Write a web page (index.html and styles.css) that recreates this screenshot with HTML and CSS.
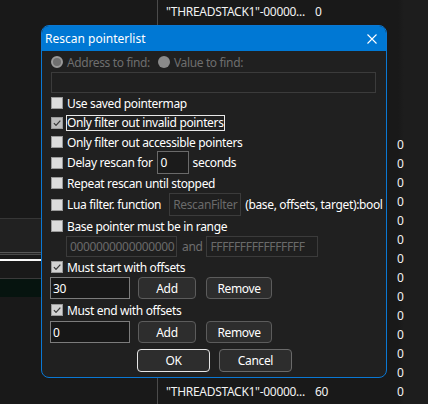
FILE: index.html
```html
<!DOCTYPE html>
<html>
<head>
<meta charset="utf-8">
<link rel="stylesheet" href="styles.css">
</head>
<body>
<div class="app">
  <div class="left">
    <div class="lp-a"></div>
    <div class="lp-line1"></div>
    <div class="lp-b"></div>
    <div class="lp-line2"></div>
    <div class="lp-c"></div>
    <div class="lp-line3"></div>
    <div class="lp-d"></div>
    <div class="lp-white"></div>
    <div class="lp-e"></div>
    <div class="lp-line4"></div>
    <div class="lp-green"></div>
  </div>
  <div class="divider"></div>
  <div class="list">
    <div class="lrow"><span class="c-name">"THREADSTACK1"-00000...</span><span class="c-val">0</span><span class="c-r"></span></div>
    <div class="lrow"></div>
    <div class="lrow"></div>
    <div class="lrow"></div>
    <div class="lrow"></div>
    <div class="lrow"></div>
    <div class="lrow"></div>
    <div class="lrow"><span class="c-name"></span><span class="c-val"></span><span class="c-r">0</span></div>
    <div class="lrow"><span class="c-name"></span><span class="c-val"></span><span class="c-r">0</span></div>
    <div class="lrow"><span class="c-name"></span><span class="c-val"></span><span class="c-r">0</span></div>
    <div class="lrow"><span class="c-name"></span><span class="c-val"></span><span class="c-r">0</span></div>
    <div class="lrow"><span class="c-name"></span><span class="c-val"></span><span class="c-r">0</span></div>
    <div class="lrow"><span class="c-name"></span><span class="c-val"></span><span class="c-r">0</span></div>
    <div class="lrow"><span class="c-name"></span><span class="c-val"></span><span class="c-r">0</span></div>
    <div class="lrow"><span class="c-name"></span><span class="c-val"></span><span class="c-r">0</span></div>
    <div class="lrow"><span class="c-name"></span><span class="c-val"></span><span class="c-r">0</span></div>
    <div class="lrow"><span class="c-name"></span><span class="c-val"></span><span class="c-r">0</span></div>
    <div class="lrow"><span class="c-name"></span><span class="c-val"></span><span class="c-r">0</span></div>
    <div class="lrow"><span class="c-name"></span><span class="c-val"></span><span class="c-r">0</span></div>
    <div class="lrow"><span class="c-name"></span><span class="c-val"></span><span class="c-r">0</span></div>
    <div class="lrow"><span class="c-name">"THREADSTACK1"-00000...</span><span class="c-val">60</span><span class="c-r">0</span></div>
  </div>
</div>

<div class="dialog">
  <div class="titlebar">
    <span class="title">Rescan pointerlist</span>
    <svg class="close" viewBox="0 0 10 10"><path d="M0.5 0.5L9.5 9.5M9.5 0.5L0.5 9.5" stroke="#fff" stroke-width="1.1" fill="none"/></svg>
  </div>
  <div class="body">
    <div class="row r-radio">
      <span class="radio r1"></span><span class="dis">Address to find:</span>
      <span class="radio r2"></span><span class="dis">Value to find:</span>
    </div>
    <div class="field addr disabled"></div>

    <div class="row chk m1"><span class="box"></span><span class="lbl">Use saved pointermap</span></div>
    <div class="row chk m2"><span class="box on dim"><svg viewBox="0 0 12 12"><path d="M2.3 6.2L4.8 8.8L10 3.2" stroke="#3a3a3a" stroke-width="1.5" fill="none"/></svg></span><span class="lbl focus">Only filter out invalid pointers</span></div>
    <div class="row chk m1"><span class="box"></span><span class="lbl">Only filter out accessible pointers</span></div>
    <div class="row chk tall"><span class="box"></span><span class="lbl">Delay rescan for</span><span class="field delay">0</span><span class="lbl after">seconds</span></div>
    <div class="row chk"><span class="box"></span><span class="lbl">Repeat rescan until stopped</span></div>
    <div class="row chk tall m1"><span class="box"></span><span class="lbl">Lua filter. function</span><span class="field lua disabled">RescanFilter</span><span class="lbl after2">(base, offsets, target):bool</span></div>
    <div class="row chk m1"><span class="box"></span><span class="lbl">Base pointer must be in range</span></div>
    <div class="row range m1">
      <span class="field rng1 disabled">0000000000000000</span>
      <span class="dis and">and</span>
      <span class="field rng2 disabled">FFFFFFFFFFFFFFFF</span>
    </div>
    <div class="row chk m1"><span class="box on"><svg viewBox="0 0 12 12"><path d="M2.3 6.2L4.8 8.8L10 3.2" stroke="#3a3a3a" stroke-width="1.5" fill="none"/></svg></span><span class="lbl">Must start with offsets</span></div>
    <div class="row offs m1">
      <span class="field off">30</span>
      <span class="btn add">Add</span>
      <span class="btn rem">Remove</span>
    </div>
    <div class="row chk m2"><span class="box on"><svg viewBox="0 0 12 12"><path d="M2.3 6.2L4.8 8.8L10 3.2" stroke="#3a3a3a" stroke-width="1.5" fill="none"/></svg></span><span class="lbl">Must end with offsets</span></div>
    <div class="row offs m2">
      <span class="field off">0</span>
      <span class="btn add">Add</span>
      <span class="btn rem">Remove</span>
    </div>
    <div class="row actions">
      <span class="btn ok">OK</span>
      <span class="btn cancel">Cancel</span>
    </div>
  </div>
</div>
</body>
</html>
```

FILE: styles.css
```css
* { box-sizing: border-box; margin: 0; padding: 0; }
html, body { width: 428px; height: 404px; overflow: hidden; }
body {
  background: #191919;
  font-family: "Noto Sans", "DejaVu Sans", sans-serif;
  font-size: 12px;
  color: #fff;
  position: relative;
}

/* background application */
.app { display: flex; height: 404px; }
.left { width: 157px; display: flex; flex-direction: column; flex: none; }
.lp-a { height: 218px; }
.lp-line1 { height: 1px; background: #363636; }
.lp-b { height: 33px; background: #212121; }
.lp-line2 { height: 1px; background: #575757; }
.lp-c { height: 1px; background: #262626; }
.lp-line3 { height: 1px; background: #4a4a4a; }
.lp-d { height: 4px; }
.lp-white { height: 2px; background: linear-gradient(90deg, #fff, #e6e6e6 70%, #8a8a8a); }
.lp-e { height: 17px; }
.lp-line4 { height: 1px; background: #3a3a3a; }
.lp-green { height: 18px; background: #06140f; }
.divider { width: 1px; background: #4b4b4b; flex: none; }
.list { flex: 1; padding-top: 2px; padding-left: 8px; background: linear-gradient(90deg, #191919 240px, #1d1d1d 246px); }
.lrow { height: 19px; display: flex; align-items: center; color: #f2f2f2; letter-spacing: -0.3px; }
.c-name { width: 149px; flex: none; }
.c-val { width: 82px; flex: none; }
.c-r { flex: none; }

/* dialog */
.dialog {
  position: absolute;
  left: 41px; top: 25px;
  width: 346px; height: 353px;
  border: 1px solid #0a78d4;
  border-radius: 8px;
  background: #202020;
  overflow: hidden;
  display: flex; flex-direction: column;
}
.titlebar {
  height: 25px; flex: none;
  background: #0078d4;
  display: flex; align-items: center;
  padding-left: 3px;
}
.title { flex: 1; font-size: 12px; color: #fff; }
.close { width: 10px; height: 10px; margin-right: 9px; }

.body { padding: 2px 0 0 9px; display: flex; flex-direction: column; letter-spacing: -0.35px; }
.row { display: flex; align-items: center; height: 18px; flex: none; }
.m1 { margin-top: 1px; }
.m2 { margin-top: 2px; }
.tall { height: 23px; }

.dis { color: #6e6e6e; }
.radio {
  width: 12px; height: 12px; border-radius: 50%;
  flex: none; margin-right: 4px;
}
.r1 { background: #6f6f6f; border: 2px solid #9a9a9a; }
.r2 { background: #8a8a8a; margin-left: 8px; }

.field {
  background: #1b1b1b;
  border: 1px solid #6a6a6a;
  color: #fff;
  display: flex; align-items: center;
  padding-left: 2px;
  flex: none;
  overflow: hidden;
  white-space: nowrap;
}
.field.disabled { border-color: #3b3b3b; background: #1f1f1f; color: #6a6a6a; }
.addr { width: 325px; height: 21px; margin-top: 1px; }

.box {
  width: 12px; height: 12px; flex: none;
  background: #dcdcdc;
  border: 1px solid #9a9a9a;
  margin-right: 4px;
  display: flex;
}
.box svg { width: 10px; height: 10px; }
.box.on { background: #d2d2d2; }
.box.dim { background: #bdbdbd; }
.lbl { white-space: nowrap; }
.focus { border: 1px solid #e8e8e8; margin-left: -1px; padding-right: 0; line-height: 14px; }

.delay { width: 32px; height: 23px; margin-left: 4px; padding-left: 3px; }
.after { margin-left: 4px; }
.lua { width: 72px; height: 23px; margin-left: 8px; padding-left: 3px; }
.after2 { margin-left: 4px; }

.range { height: 21px; }
.rng1 { width: 111px; height: 21px; margin-left: 15px; padding-left: 3px; }
.and { margin: 0 4px 0 5px; }
.rng2 { width: 112px; height: 21px; padding-left: 3px; }

.offs { height: 22px; }
.off { width: 80px; height: 22px; margin-left: -1px; border-color: #7c7c7c; background: #171717; }
.btn {
  display: flex; align-items: center; justify-content: center;
  background: #2d2d2d;
  border: 1px solid #5c5c5c;
  border-radius: 4px;
  color: #fff;
  height: 22px; flex: none;
}
.add { width: 58px; margin-left: 8px; }
.rem { width: 66px; margin-left: 10px; }
.actions { height: 23px; margin-top: 6px; }
.actions .btn { height: 23px; width: 73px; }
.ok { margin-left: 86px; border-color: #e6e6e6; }
.cancel { margin-left: 9px; border-color: #6a6a6a; }
```
